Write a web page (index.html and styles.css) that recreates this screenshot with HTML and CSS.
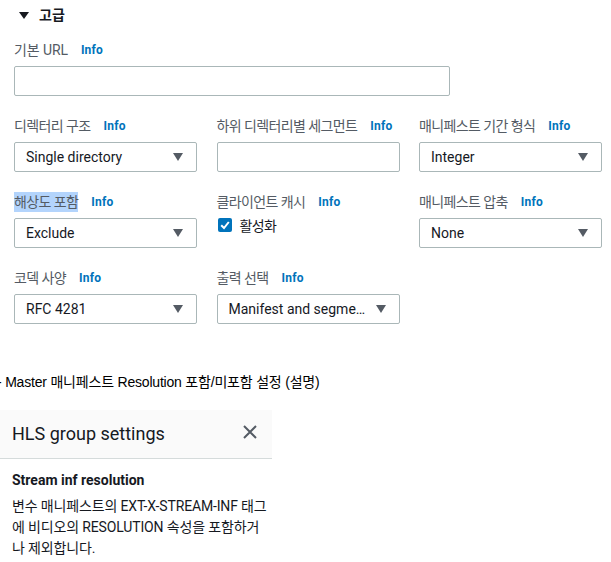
FILE: index.html
```html
<!DOCTYPE html>
<html lang="ko">
<head>
<meta charset="utf-8">
<link rel="stylesheet" href="styles.css">
</head>
<body>
<div class="advanced">
  <div class="section-head"><span class="caret"></span><span>고급</span></div>

  <div class="field url-field">
    <div class="label"><span class="latin">기본 URL</span><a class="info">Info</a></div>
    <div class="box"></div>
  </div>

  <div class="grid">
    <div class="field">
      <div class="label"><span>디렉터리 구조</span><a class="info">Info</a></div>
      <div class="box select"><span>Single directory</span><span class="arrow"></span></div>
    </div>
    <div class="field">
      <div class="label"><span>하위 디렉터리별 세그먼트</span><a class="info">Info</a></div>
      <div class="box"></div>
    </div>
    <div class="field">
      <div class="label"><span>매니페스트 기간 형식</span><a class="info">Info</a></div>
      <div class="box select"><span>Integer</span><span class="arrow"></span></div>
    </div>

    <div class="field">
      <div class="label"><span class="hl">해상도 포함</span><a class="info">Info</a></div>
      <div class="box select"><span>Exclude</span><span class="arrow"></span></div>
    </div>
    <div class="field">
      <div class="label"><span>클라이언트 캐시</span><a class="info">Info</a></div>
      <div class="check-row">
        <span class="checkbox"><svg viewBox="0 0 14 14" width="14" height="14"><path d="M3.2 7.2 L6 10 L10.8 4" fill="none" stroke="#fff" stroke-width="2"/></svg></span>
        <span class="check-text">활성화</span>
      </div>
    </div>
    <div class="field">
      <div class="label"><span>매니페스트 압축</span><a class="info">Info</a></div>
      <div class="box select"><span>None</span><span class="arrow"></span></div>
    </div>

    <div class="field">
      <div class="label"><span>코덱 사양</span><a class="info">Info</a></div>
      <div class="box select"><span>RFC 4281</span><span class="arrow"></span></div>
    </div>
    <div class="field">
      <div class="label"><span>출력 선택</span><a class="info">Info</a></div>
      <div class="box select"><span class="ellipsis">Manifest and segments files</span><span class="arrow"></span></div>
    </div>
  </div>
</div>

<p class="caption">- Master 매니페스트 Resolution 포함/미포함 설정 (설명)</p>

<div class="panel">
  <div class="panel-head">
    <span class="panel-title">HLS group settings</span>
    <svg class="close" viewBox="0 0 16 16" width="16" height="16"><path d="M2 2 L14 14 M14 2 L2 14" stroke="#545b64" stroke-width="2" fill="none"/></svg>
  </div>
  <div class="panel-body">
    <h3 class="help-title">Stream inf resolution</h3>
    <p class="help-text">변수 매니페스트의 EXT-X-STREAM-INF 태그<br>에 비디오의 RESOLUTION 속성을 포함하거<br>나 제외합니다.</p>
  </div>
</div>
</body>
</html>
```

FILE: styles.css
```css
html, body {
  margin: 0;
  padding: 0;
  background: #ffffff;
}
body {
  width: 611px;
  font-family: Roboto, "Noto Sans CJK KR", sans-serif;
  color: #16191f;
  font-size: 14px;
}
.advanced {
  padding: 5px 9px 0 14px;
}
.section-head {
  display: flex;
  align-items: center;
  height: 20px;
  line-height: 20px;
  font-weight: 700;
  font-size: 14px;
  color: #16191f;
  gap: 10px;
  padding-left: 5px;
}
.caret {
  width: 0;
  height: 0;
  border-left: 5px solid transparent;
  border-right: 5px solid transparent;
  border-top: 7px solid #16191f;
}
.field {
  display: flex;
  flex-direction: column;
}
.url-field {
  margin-top: 15px;
  width: 436px;
}
.label {
  height: 20px;
  line-height: 20px;
  display: flex;
  align-items: center;
  color: #545b64;
  font-size: 14px;
  margin-bottom: 6px;
  white-space: nowrap;
  letter-spacing: -0.6px;
}
.label .latin {
  letter-spacing: -0.1px;
}
.label .info {
  color: #0073bb;
  font-weight: 700;
  font-size: 12px;
  margin-left: 13px;
  letter-spacing: 0.2px;
}
.hl {
  background: #b3d4fc;
  color: #545b64;
}
.box {
  height: 28px;
  border: 1px solid #aab7b8;
  border-radius: 2px;
  background: #fff;
  display: flex;
  align-items: center;
  padding: 0 13px 0 11px;
  box-sizing: content-box;
}
.select span:first-child {
  flex: 1;
  min-width: 0;
}
.ellipsis {
  white-space: nowrap;
  overflow: hidden;
  text-overflow: ellipsis;
}
.arrow {
  flex: none;
  width: 0;
  height: 0;
  border-left: 5px solid transparent;
  border-right: 5px solid transparent;
  border-top: 8px solid #545b64;
  margin-left: 6px;
}
.grid {
  margin-top: 20px;
  display: grid;
  grid-template-columns: 183px 183px 183px;
  column-gap: 19.5px;
  row-gap: 20px;
}
.check-row {
  display: flex;
  align-items: center;
  height: 20px;
  margin-top: -3px;
  gap: 8px;
  padding-left: 1px;
}
.check-text {
  letter-spacing: -0.6px;
}
.checkbox {
  width: 14px;
  height: 14px;
  background: #0073bb;
  border-radius: 2px;
  display: flex;
}
.caption {
  margin: 50px 0 0 -3px;
  font-family: "Liberation Sans", "Noto Sans CJK KR", sans-serif;
  font-size: 14px;
  line-height: 16px;
  color: #000;
  white-space: nowrap;
  letter-spacing: -0.2px;
}
.panel {
  width: 272px;
  margin-top: 20px;
}
.panel-head {
  height: 48px;
  background: #fafafa;
  border-bottom: 1px solid #d5dbdb;
  display: flex;
  align-items: center;
  justify-content: space-between;
  padding: 0 14px 0 12px;
}
.panel-title {
  font-size: 18px;
  color: #16191f;
  margin-top: -2px;
}
.close {
  margin-top: -4px;
}
.panel-body {
  padding: 10px 12px 0 12px;
}
.help-title {
  margin: 0;
  font-size: 14px;
  font-weight: 700;
  line-height: 22px;
}
.help-text {
  margin: 5px 0 0 0;
  font-size: 14px;
  line-height: 21px;
  letter-spacing: -0.15px;
  white-space: nowrap;
}
```
